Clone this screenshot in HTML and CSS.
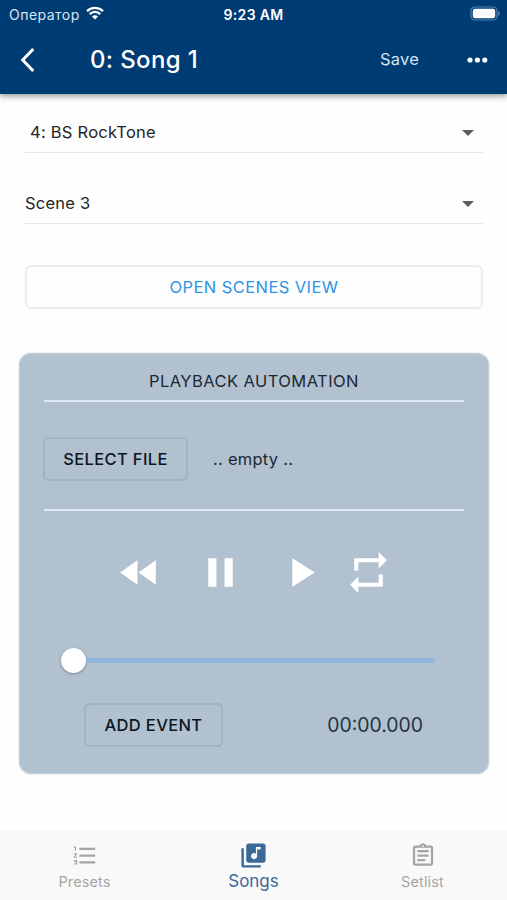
FILE: index.html
```html
<!DOCTYPE html>
<html lang="en">
<head>
<meta charset="utf-8">
<title>Song 1</title>
<link rel="stylesheet" href="styles.css">
</head>
<body>
<div class="app">
  <header class="header">
    <div class="status">
      <div class="carrier"><span class="carrier-name">Оператор</span>
        <svg class="wifi" viewBox="0 0 18 14"><path d="M1 5.2a11.3 11.3 0 0 1 16 0M3.8 8.1a7.3 7.3 0 0 1 10.4 0" fill="none" stroke="#fff" stroke-width="2.3"/><path d="M9 13.6 5.9 10.5a4.4 4.4 0 0 1 6.2 0z" fill="#fff"/></svg>
      </div>
      <span class="clock">9:23 AM</span>
      <svg class="battery" viewBox="0 0 31 15"><rect x="1" y="1" width="26" height="13" rx="4" fill="none" stroke="#5580a8" stroke-width="1.2"/><rect x="2.8" y="2.8" width="22.4" height="9.4" rx="2.2" fill="#fff"/><path d="M28.4 5v5c1.8-.8 1.8-4.2 0-5z" fill="#6f93b5"/></svg>
    </div>
    <div class="toolbar">
      <svg class="back" viewBox="0 0 16 26"><path d="M13.3 2 2.7 13l10.6 11" fill="none" stroke="#fff" stroke-width="3"/></svg>
      <h1 class="title">0: Song 1</h1>
      <span class="save">Save</span>
      <svg class="more" viewBox="0 0 21 6"><circle cx="3" cy="3" r="2.6"/><circle cx="10.4" cy="3" r="2.6"/><circle cx="17.8" cy="3" r="2.6"/></svg>
    </div>
  </header>
  <main class="content">
    <div class="select preset"><span class="preset-text">4: BS RockTone</span><svg class="caret" viewBox="0 0 12 6"><path d="M0 0h12L6 6z"/></svg></div>
    <div class="select scene"><span class="scene-text">Scene 3</span><svg class="caret" viewBox="0 0 12 6"><path d="M0 0h12L6 6z"/></svg></div>
    <button class="open"><span>OPEN SCENES VIEW</span></button>
    <section class="card">
      <h2 class="card-title"><span>PLAYBACK AUTOMATION</span></h2>
      <div class="file">
        <button class="btn select-file"><span>SELECT FILE</span></button>
        <span class="empty">.. empty ..</span>
      </div>
      <div class="controls">
        <svg class="control" viewBox="0 0 24 24"><path d="M11 18V6l-8.5 6 8.5 6zm.5-6 8.5 6V6l-8.5 6z"/></svg>
        <svg class="control" viewBox="0 0 24 24"><path d="M6 19h4V5H6v14zm8-14v14h4V5h-4z"/></svg>
        <svg class="control" viewBox="0 0 24 24"><path d="M8 5v14l11-7z"/></svg>
        <svg class="control repeat" viewBox="0 0 24 24"><path d="M7 7h10v3l4-4-4-4v3H5v6h2V7zm10 10H7v-3l-4 4 4 4v-3h12v-6h-2v4z"/></svg>
      </div>
      <div class="slider"><span class="thumb"></span><span class="track"></span></div>
      <div class="event">
        <button class="btn add-event"><span>ADD EVENT</span></button>
        <span class="time">00:00.000</span>
      </div>
    </section>
  </main>
  <nav class="tabs">
    <div class="tab">
      <svg class="tab-icon presets-icon" viewBox="0 0 24 24"><path d="M2 17h2v.5H3v1h1v.5H2v1h3v-4H2v1zm1-9h1V4H2v1h1v3zm-1 3h1.8L2 13.1v.9h3v-1H3.2L5 10.9V10H2v1zm5-6v2h14V5H7zm0 14h14v-2H7v2zm0-6h14v-2H7v2z"/></svg>
      <span class="presets-text">Presets</span>
    </div>
    <div class="tab active">
      <svg class="tab-icon songs-icon" viewBox="0 0 24 24"><path d="M20 2H8c-1.1 0-2 .9-2 2v12c0 1.1.9 2 2 2h12c1.1 0 2-.9 2-2V4c0-1.1-.9-2-2-2zm-2 5h-3v5.5a2.5 2.5 0 1 1-2.5-2.5c.57 0 1.08.19 1.5.51V5h4v2zM4 6H2v14c0 1.1.9 2 2 2h14v-2H4V6z"/></svg>
      <span class="songs-text">Songs</span>
    </div>
    <div class="tab">
      <svg class="tab-icon" viewBox="0 0 24 24"><path d="M7 15h7v2H7zm0-4h10v2H7zm0-4h10v2H7zm12-4h-4.18C14.4 1.84 13.3 1 12 1s-2.4.84-2.82 2H5c-1.1 0-2 .9-2 2v14c0 1.1.9 2 2 2h14c1.1 0 2-.9 2-2V5c0-1.1-.9-2-2-2zm-7-.25a.75.75 0 1 1 0 1.5.75.75 0 0 1 0-1.5zM19 19H5V5h14v14z"/></svg>
      <span class="setlist-text">Setlist</span>
    </div>
  </nav>
</div>
</body>
</html>
```

FILE: styles.css
```css
* { box-sizing: border-box; }
body { margin: 0; font-family: Inter, "Noto Sans", sans-serif; color: #252525; background: #fefefe; }
svg { display: block; flex: none; }
button { font: inherit; padding: 0; background: transparent; }
span { white-space: nowrap; }
.app { width: 507px; height: 900px; display: flex; flex-direction: column; }
.header { height: 94px; flex: none; background: #003c74; color: #fff; box-shadow: 0 2px 6px rgba(0,0,0,.42); }
.status { height: 28px; display: grid; grid-template-columns: 1fr auto 1fr; align-items: center; padding: 0 6px 0 9px; }
.carrier { display: flex; align-items: center; gap: 6px; font-size: 14px; color: #d7e6f5; }
.carrier-name { letter-spacing: .48px; }
.wifi { width: 18px; height: 14px; margin-top: -2px; }
.clock { margin-left: -3px; font-size: 14px; font-weight: 600; letter-spacing: .35px; }
.battery { width: 31px; height: 15px; justify-self: end; margin-top: -2px; }
.toolbar { height: 64px; display: flex; align-items: center; padding: 0 19px 0 20px; }
.back { width: 16px; height: 26px; }
.title { margin: 0 0 0 54px; font-size: 24px; font-weight: 500; line-height: 30px; letter-spacing: .35px; }
.save { margin: -2px 0 0 auto; font-size: 16.5px; color: #d5e5f4; letter-spacing: .2px; }
.more { width: 21px; height: 6px; margin-left: 48px; fill: #fff; }
.content { flex: 1; padding: 18px 18px 0 19px; }
.select { height: 41px; margin: 0 6px; padding: 0 9px 0 0; display: flex; align-items: center; justify-content: space-between; border-bottom: 1px solid #e6e6e6; font-size: 16.5px; letter-spacing: .24px; }
.preset { padding-left: 5px; }
.scene { margin-top: 30px; }
.caret { width: 12px; height: 6px; margin-top: 1px; fill: #5c5c5c; }
.open { display: block; width: 458px; height: 44px; margin: 41px 0 0 6px; padding-bottom: 1px; border: 2px solid #ededed; border-radius: 6px; color: #2e93e6; font-size: 16.5px; letter-spacing: .42px; }
.card { height: 421px; margin-top: 44px; padding: 0 24px; background: #b1c1d0; border: 1px solid #c2d0dc; border-radius: 12px; box-shadow: 0 0 2px rgba(70,90,110,.3); }
.card-title { margin: 0; height: 48px; padding-top: 7px; display: flex; align-items: center; justify-content: center; border-bottom: 2px solid #dfe9f2; font-size: 16.5px; font-weight: 400; letter-spacing: .43px; color: #1b2834; }
.file { height: 109px; display: flex; align-items: center; padding-top: 7px; border-bottom: 2px solid #dfe9f2; }
.btn { height: 44px; border: 2px solid #a1b2c2; border-radius: 5px; color: #0b1620; font-size: 16.5px; font-weight: 500; letter-spacing: .35px; }
.select-file { width: 145px; margin-left: -1px; }
.empty { margin-left: 25px; font-size: 16.5px; letter-spacing: .25px; color: #1b2834; }
.controls { display: flex; gap: 31.5px; margin: 37px 0 0 71px; }
.control { width: 49px; height: 49px; fill: #fff; }
.repeat { margin-left: -12.5px; }
.slider { display: flex; align-items: center; height: 26px; margin: 50px 29px 0 17px; }
.thumb { width: 25px; height: 25px; flex: none; border-radius: 50%; background: #fff; box-shadow: 0 1px 3px rgba(0,0,0,.3); }
.track { flex: 1; height: 5px; background: #91b5d9; border-radius: 0 3px 3px 0; }
.event { display: flex; align-items: center; justify-content: space-between; margin: 30px 41px 0 40px; }
.add-event { width: 139px; }
.time { font-size: 19.4px; color: #263442; }
.tabs { height: 70px; flex: none; display: grid; grid-template-columns: repeat(3, 1fr); background: #f9f9f9; color: #a5a5a5; }
.tab { display: flex; flex-direction: column; align-items: center; padding-top: 12px; font-size: 14.5px; letter-spacing: .12px; }
.tab-icon { width: 28px; height: 27px; fill: currentColor; margin-bottom: 3px; }
.tab span { line-height: 19px; }
.active { color: #3a6999; font-size: 17px; letter-spacing: 0; }
.songs-icon { width: 29px; height: 29px; margin: -1px 0 2px; }
```
